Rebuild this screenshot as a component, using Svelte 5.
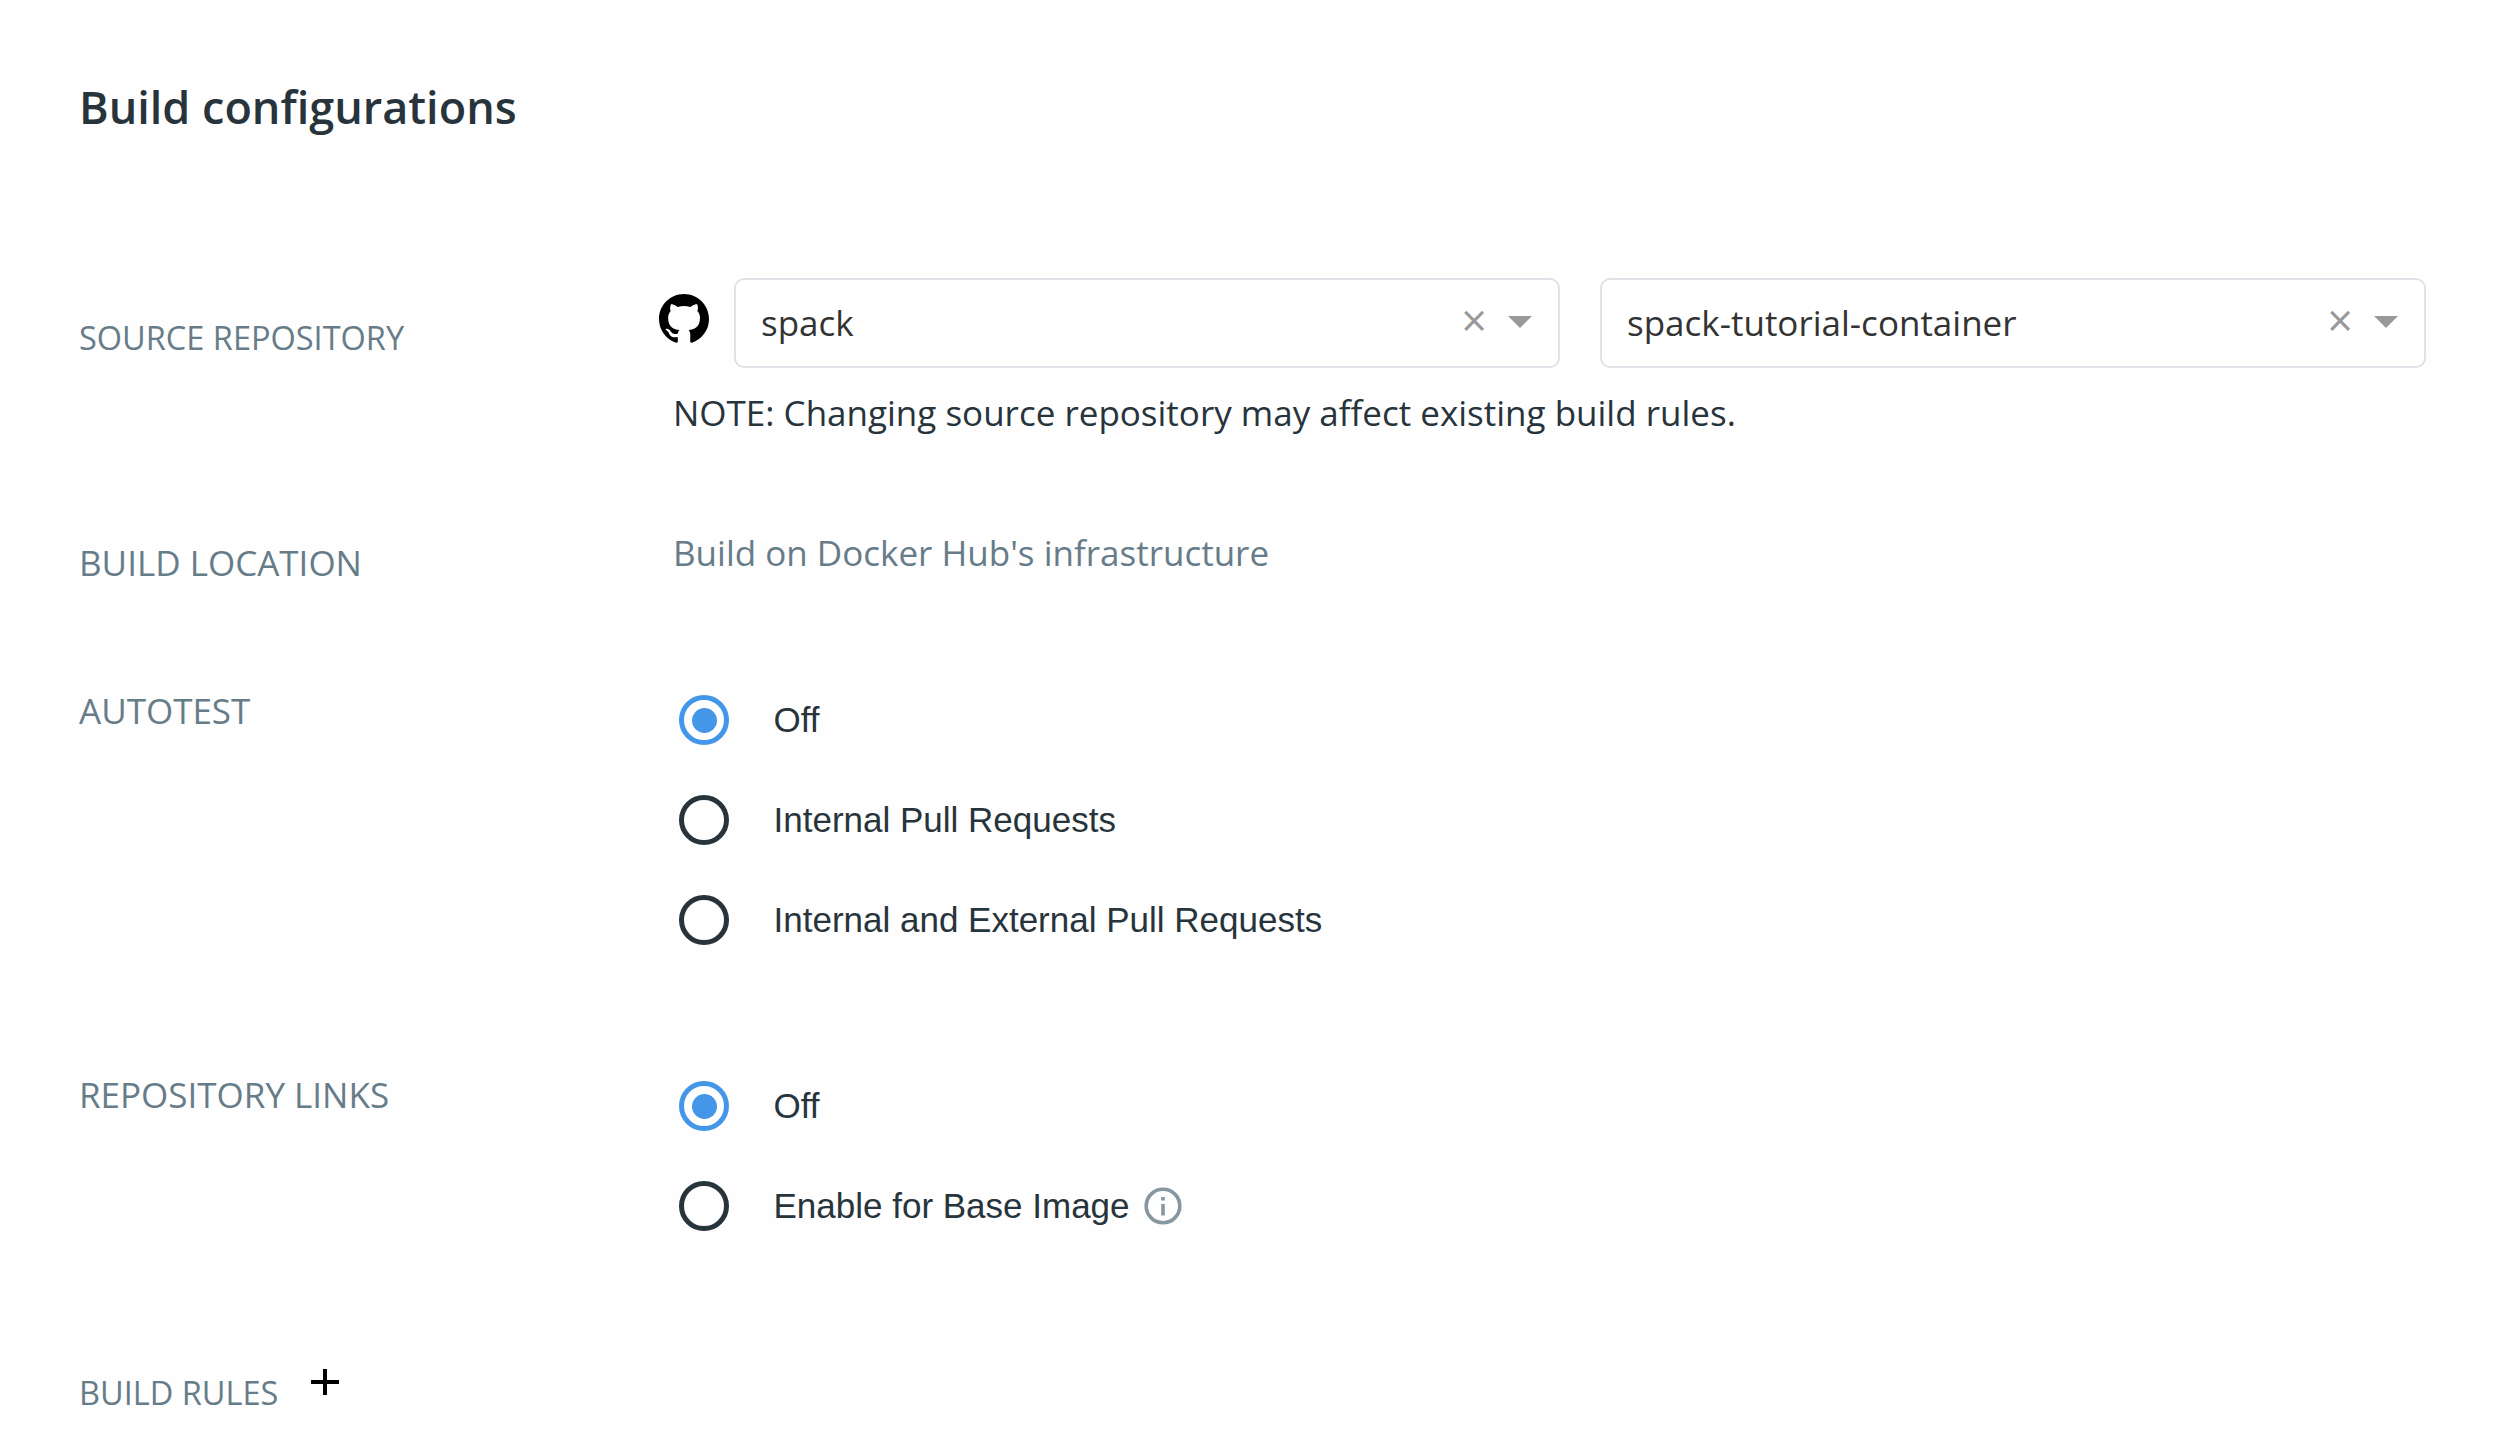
<script>
  const sources = ['spack', 'spack-tutorial-container'];
  const autotest = ['Off', 'Internal Pull Requests', 'Internal and External Pull Requests'];
  const links = ['Off', 'Enable for Base Image'];
  let autotestChoice = $state(0);
  let linksChoice = $state(0);
</script>

<main>
  <h2>Build configurations</h2>

  <section class="row source">
    <div class="label small">SOURCE REPOSITORY</div>
    <div class="content">
      <div class="selects">
        <svg class="github" viewBox="0 0 16 16" aria-hidden="true">
          <path d="M8 0C3.58 0 0 3.58 0 8c0 3.54 2.29 6.53 5.47 7.59.4.07.55-.17.55-.38 0-.19-.01-.82-.01-1.49-2.01.37-2.53-.49-2.69-.94-.09-.23-.48-.94-.82-1.13-.28-.15-.68-.52-.01-.53.63-.01 1.08.58 1.23.82.72 1.21 1.87.87 2.33.66.07-.52.28-.87.51-1.07-1.78-.2-3.64-.89-3.64-3.95 0-.87.31-1.59.82-2.15-.08-.2-.36-1.02.08-2.12 0 0 .67-.21 2.2.82.64-.18 1.32-.27 2-.27s1.36.09 2 .27c1.53-1.04 2.2-.82 2.2-.82.44 1.1.16 1.92.08 2.12.51.56.82 1.27.82 2.15 0 3.07-1.87 3.75-3.65 3.95.29.25.54.73.54 1.48 0 1.07-.01 1.93-.01 2.2 0 .21.15.46.55.38A8.01 8.01 0 0 0 16 8c0-4.42-3.58-8-8-8z" />
        </svg>
        {#each sources as source}
          <div class="select">
            <span class="value">{source}</span>
            <span class="clear">×</span>
            <span class="arrow"></span>
          </div>
        {/each}
      </div>
      <p class="note">NOTE: Changing source repository may affect existing build rules.</p>
    </div>
  </section>

  <section class="row location">
    <div class="label">BUILD LOCATION</div>
    <div class="content muted">Build on Docker Hub's infrastructure</div>
  </section>

  <section class="row autotest">
    <div class="label">AUTOTEST</div>
    <div class="content">
      {#each autotest as option, i}
        <label class="option">
          <input type="radio" name="autotest" value={i} bind:group={autotestChoice} />
          <span>{option}</span>
        </label>
      {/each}
    </div>
  </section>

  <section class="row links">
    <div class="label">REPOSITORY LINKS</div>
    <div class="content">
      {#each links as option, i}
        <label class="option">
          <input type="radio" name="links" value={i} bind:group={linksChoice} />
          <span>{option}</span>
          {#if i === 1}
            <svg class="info" viewBox="0 0 38 38" aria-hidden="true">
              <circle cx="19" cy="19" r="16.8" />
              <path d="M19 17v11.5M19 10v3.6" />
            </svg>
          {/if}
        </label>
      {/each}
    </div>
  </section>

  <section class="rules">
    <div class="label small">BUILD RULES</div>
    <svg class="plus" viewBox="0 0 28 28" aria-hidden="true">
      <path d="M14 1v26M0 14h28" />
    </svg>
  </section>
</main>

<style>
  :global(body) {
    background: #fefefe;
  }
  main {
    box-sizing: border-box;
    height: 1438px;
    overflow: hidden;
    padding: 77px 80px 0 79px;
    font-family: 'Open Sans', sans-serif;
    font-size: 35px;
    line-height: 50px;
    color: #27343b;
  }
  h2 {
    margin: 0 0 141px;
    font-size: 45px;
    line-height: 60px;
    font-weight: 600;
  }
  .row {
    display: grid;
    grid-template-columns: 594px 1fr;
    align-items: start;
  }
  .label,
  .muted {
    color: #677c89;
  }
  .small {
    font-size: 32.5px;
  }
  .source {
    height: 250px;
  }
  .source .label {
    padding-top: 35px;
  }
  .location {
    height: 142px;
  }
  .location .label {
    padding-top: 10px;
  }
  .autotest {
    height: 386px;
  }
  .autotest .label {
    padding-top: 16px;
  }
  .links {
    height: 312px;
  }
  .links .label {
    padding-top: 14px;
  }
  .selects {
    display: flex;
    align-items: center;
    margin-left: -14px;
  }
  .github {
    flex: none;
    width: 50px;
    height: 50px;
    margin: 0 25px 8px 0;
  }
  .select {
    box-sizing: border-box;
    flex: 1;
    display: flex;
    align-items: center;
    height: 90px;
    padding: 0 26px 0 25px;
    border: 2px solid #dfe3e7;
    border-radius: 10px;
    background: #fff;
    color: #333;
  }
  .select + .select {
    margin-left: 40px;
  }
  .value {
    flex: 1;
  }
  .clear {
    margin-right: 21px;
    padding-bottom: 7px;
    font-size: 45px;
    color: #999;
  }
  .arrow {
    border: 12px solid transparent;
    border-top-color: #999;
    border-bottom: 0;
    margin-bottom: 2px;
  }
  .note {
    margin: 20px 0 0;
  }
  .option {
    display: flex;
    align-items: center;
    height: 100px;
    padding-left: 6px;
    font-family: 'Liberation Sans', sans-serif;
  }
  input {
    appearance: none;
    box-sizing: border-box;
    flex: none;
    width: 50px;
    height: 50px;
    margin: 0 44.5px 0 0;
    border: 5px solid #27343b;
    border-radius: 50%;
  }
  input:checked {
    border-color: #4496e8;
    background: #4496e8;
    background-clip: content-box;
    padding: 7.5px;
  }
  .info {
    width: 38px;
    height: 38px;
    margin-left: 14px;
    fill: none;
    stroke: #8797a2;
    stroke-width: 3.6;
  }
  .rules {
    display: flex;
    align-items: flex-start;
  }
  .plus {
    width: 28px;
    height: 28px;
    margin: 0 0 0 33px;
    stroke: #000;
    stroke-width: 4;
  }
</style>
